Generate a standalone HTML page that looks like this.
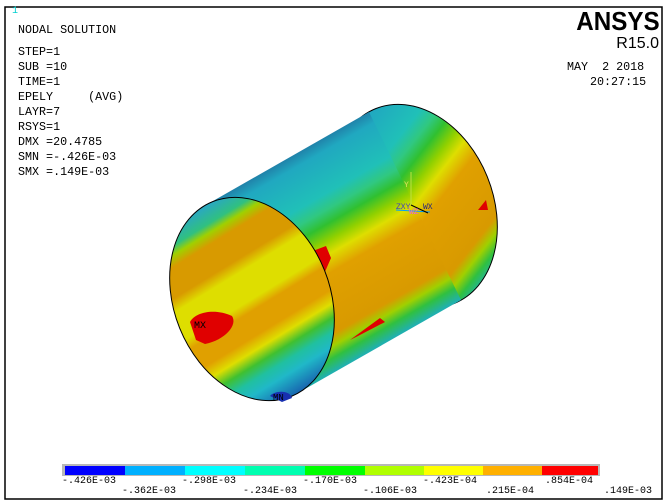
<!DOCTYPE html>
<html><head><meta charset="utf-8"><style>
html,body{margin:0;padding:0;background:#fff;}
body{width:668px;height:504px;overflow:hidden;position:relative;}
.t{position:absolute;font-family:"Liberation Mono",monospace;font-size:11.7px;color:#000;white-space:pre;line-height:12px;}
.l{position:absolute;font-family:"Liberation Mono",monospace;font-size:10px;color:#000;white-space:pre;line-height:10px;}
</style></head><body>
<svg width="668" height="504" style="position:absolute;left:0;top:0">
<defs>
<linearGradient id="bg" gradientUnits="userSpaceOnUse" x1="287" y1="158" x2="391" y2="339">
<stop offset="0" stop-color="#2080a8"/>
<stop offset="0.06" stop-color="#20a8c0"/>
<stop offset="0.24" stop-color="#20c0b8"/>
<stop offset="0.31" stop-color="#30c880"/>
<stop offset="0.37" stop-color="#30c030"/>
<stop offset="0.44" stop-color="#90d000"/>
<stop offset="0.5" stop-color="#dede00"/>
<stop offset="0.58" stop-color="#e0a000"/>
<stop offset="0.84" stop-color="#d89a00"/>
<stop offset="0.89" stop-color="#a0d000"/>
<stop offset="0.94" stop-color="#30c040"/>
<stop offset="1" stop-color="#20b0b0"/>
</linearGradient>
<linearGradient id="fg" gradientUnits="userSpaceOnUse" x1="235" y1="197" x2="269" y2="401">
<stop offset="0" stop-color="#2aa8c0"/>
<stop offset="0.08" stop-color="#30c080"/>
<stop offset="0.12" stop-color="#a0d000"/>
<stop offset="0.17" stop-color="#d89a00"/>
<stop offset="0.3" stop-color="#d89a00"/>
<stop offset="0.36" stop-color="#dede00"/>
<stop offset="0.5" stop-color="#dede00"/>
<stop offset="0.55" stop-color="#e0a000"/>
<stop offset="0.66" stop-color="#e0a000"/>
<stop offset="0.72" stop-color="#dede00"/>
<stop offset="0.78" stop-color="#40c030"/>
<stop offset="0.84" stop-color="#20c0a0"/>
<stop offset="0.9" stop-color="#20b8c8"/>
<stop offset="1" stop-color="#1868b0"/>
</linearGradient>
</defs>
<rect x="5" y="7" width="657" height="492" fill="#fff" stroke="#000" stroke-width="1.5"/>
<ellipse cx="415" cy="206" rx="78" ry="105" transform="rotate(-22 415 206)" fill="url(#bg)" stroke="#000" stroke-width="1"/>
<polygon points="206,205 369,112 461,300 298,393" fill="url(#bg)"/>
<path d="M310,252 L326,246 L331,258 L324,274 L312,282 Z" fill="#e00000"/>
<path d="M350,340 L380,318 L385,322 L358,336 Z" fill="#e00000"/>
<path d="M478,210 L486,200 L488,210 Z" fill="#e00000"/>
<ellipse cx="252" cy="299" rx="78" ry="105" transform="rotate(-22 252 299)" fill="url(#fg)" stroke="#000" stroke-width="1"/>
<path d="M190,322 C195,312 215,308 232,316 C238,325 225,340 205,344 L196,340 Z" fill="#e00000"/>
<path d="M270,396 C275,390 290,390 292,398 L282,402 Z" fill="#1830b0"/>
<g stroke-width="1">
<line x1="411" y1="172" x2="411" y2="205" stroke="#c0e040"/>
<line x1="396" y1="210" x2="430" y2="212" stroke="#00a0ff"/>
<line x1="411" y1="205" x2="428" y2="213" stroke="#000"/>
</g>
<text x="404" y="187" font-family="Liberation Mono" font-size="8" fill="#e0e060">Y</text>
<text x="396" y="209" font-family="Liberation Mono" font-size="8" fill="#4040c0">ZXY</text>
<text x="423" y="209" font-family="Liberation Mono" font-size="8" fill="#202080">WX</text>
<text x="409" y="214" font-family="Liberation Mono" font-size="8" fill="#e060e0">WZ</text>
<text x="194" y="328" font-family="Liberation Mono" font-size="10" fill="#000">MX</text>
<text x="273" y="400" font-family="Liberation Mono" font-size="9" fill="#000">MN</text>
<rect x="62" y="464" width="538" height="12" fill="#b8b8b8"/>
<rect x="65" y="466" width="60" height="9" fill="#0000ff"/>
<rect x="125" y="466" width="60" height="9" fill="#00b0ff"/>
<rect x="185" y="466" width="60" height="9" fill="#00ffff"/>
<rect x="245" y="466" width="60" height="9" fill="#00ffb0"/>
<rect x="305" y="466" width="60" height="9" fill="#00ff00"/>
<rect x="365" y="466" width="59" height="9" fill="#b0ff00"/>
<rect x="424" y="466" width="59" height="9" fill="#ffff00"/>
<rect x="483" y="466" width="59" height="9" fill="#ffb000"/>
<rect x="542" y="466" width="56" height="9" fill="#ff0000"/>
</svg>
<div class="t" style="left:12px;top:6px;color:#00d0d0;font-size:10px">1</div>
<div class="t" style="left:18px;top:24px">NODAL SOLUTION</div>
<div class="t" style="left:18px;top:45px;line-height:15px">STEP=1
SUB =10
TIME=1
EPELY     (AVG)
LAYR=7
RSYS=1
DMX =20.4785
SMN =-.426E-03
SMX =.149E-03</div>
<div style="position:absolute;right:8px;top:6px;font-family:'Liberation Sans',sans-serif;font-weight:bold;font-size:26px;line-height:30px;transform:scaleX(0.93);transform-origin:right">ANSYS</div>
<div style="position:absolute;right:9px;top:35px;font-family:'Liberation Sans',sans-serif;font-size:16px;line-height:18px">R15.0</div>
<div class="t" style="left:567px;top:61px">MAY  2 2018</div>
<div class="t" style="left:590px;top:76px">20:27:15</div>
<div class="l" style="left:62px;top:477px">-.426E-03</div>
<div class="l" style="left:122px;top:487px">-.362E-03</div>
<div class="l" style="left:182px;top:477px">-.298E-03</div>
<div class="l" style="left:243px;top:487px">-.234E-03</div>
<div class="l" style="left:303px;top:477px">-.170E-03</div>
<div class="l" style="left:363px;top:487px">-.106E-03</div>
<div class="l" style="left:423px;top:477px">-.423E-04</div>
<div class="l" style="left:486px;top:487px">.215E-04</div>
<div class="l" style="left:545px;top:477px">.854E-04</div>
<div class="l" style="left:604px;top:487px">.149E-03</div>
</body></html>
